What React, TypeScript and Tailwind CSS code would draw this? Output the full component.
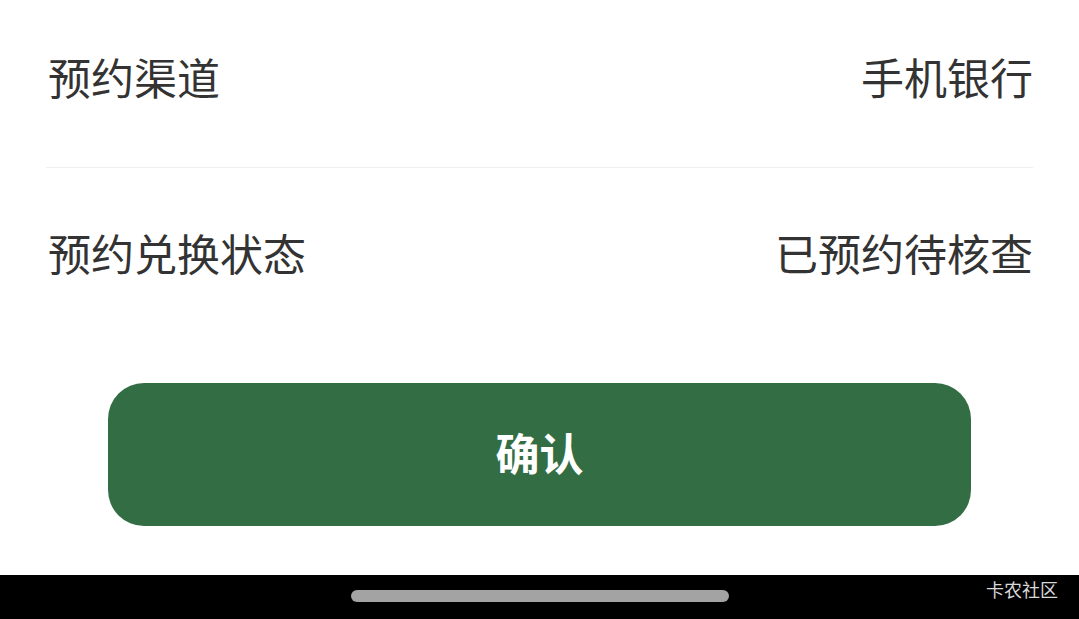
import React from 'react';

const font = { fontFamily: '"Noto Sans CJK SC", "Noto Sans", sans-serif' };

export default function App() {
  return (
    <div className="w-full h-[619px] flex flex-col bg-white overflow-hidden" style={font}>
      <div className="flex-1 flex flex-col">
        <div className="mx-[46px] h-[168px] border-b border-[#f0f0f0] flex justify-between items-start pt-[52px] pl-[2px] pr-0">
          <span className="text-[43px] leading-[48px] text-[#333333]">预约渠道</span>
          <span className="text-[43px] leading-[48px] text-[#333333]">手机银行</span>
        </div>
        <div className="mx-[46px] flex justify-between items-start pt-[60px] pl-[2px] pr-0">
          <span className="text-[43px] leading-[48px] text-[#333333]">预约兑换状态</span>
          <span className="text-[43px] leading-[48px] text-[#333333]">已预约待核查</span>
        </div>
        <div className="px-[108px] mt-[107px]">
          <button className="w-full h-[143px] rounded-[36px] bg-[#336d44] text-white text-[44px] leading-[48px] font-bold flex items-center justify-center pb-[6px]">
            确认
          </button>
        </div>
      </div>
      <div className="relative h-[44px] bg-black flex justify-center pt-[15px]">
        <div className="w-[378px] h-[12px] rounded-full bg-[#a3a3a3]" />
        <span className="absolute right-[21px] top-[3px] text-[18px] leading-[22px] text-[#d8d8d8]">卡农社区</span>
      </div>
    </div>
  );
}
